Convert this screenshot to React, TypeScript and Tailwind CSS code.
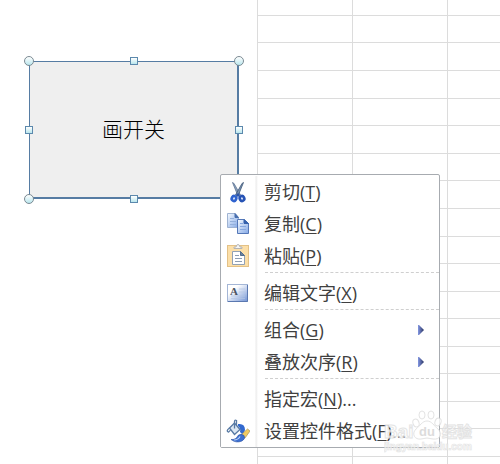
import React from 'react';

interface MenuEntry {
  label: string;
  hotkey: string;
  suffix?: string;
  icon?: React.ReactNode;
  submenu?: boolean;
}

const CutIcon: React.FC = () => (
  <svg viewBox="0 0 24 24" className="w-6 h-6" fill="none">
    <path d="M6.500 2.500 L8 3.500 L14.500 15 L12 16 Z" fill="#8ea2bb" stroke="#5d7494" strokeWidth=".8" />
    <path d="M17.500 2.500 L16 3.500 L9.500 15 L12 16 Z" fill="#7990ae" stroke="#3f5879" strokeWidth=".8" />
    <ellipse cx="8" cy="18.500" rx="2.200" ry="2.500" transform="rotate(28 8 18.500)" fill="#dfe9fa" stroke="#2f63cf" strokeWidth="2.600" />
    <ellipse cx="16" cy="18.500" rx="2.200" ry="2.500" transform="rotate(-28 16 18.500)" fill="#dfe9fa" stroke="#2753b5" strokeWidth="2.600" />
    <path d="M10 15 L12 13 L14 15 L12 17 Z" fill="#2c55a8" />
  </svg>
);

const CopyIcon: React.FC = () => (
  <svg viewBox="0 0 24 24" className="w-6 h-6">
    <defs>
      <linearGradient id="page" x1="0" y1="0" x2="1" y2="1">
        <stop offset="0" stopColor="#f5faff" />
        <stop offset="1" stopColor="#85a9e6" />
      </linearGradient>
    </defs>
    <path d="M1.500 1.500 H9 L12.500 5.500 V15.500 H1.500 Z" fill="url(#page)" stroke="#9fb3d2" />
    <path d="M9 1.500 V5.500 H12.500 Z" fill="#486fae" stroke="#486fae" />
    <path d="M4 6.500 H8 M4 9.500 H10 M4 12.500 H10" stroke="#94b0db" />
    <path d="M11.500 7.500 H18 L22.500 11.500 V21.500 H11.500 Z" fill="url(#page)" stroke="#5578b8" />
    <path d="M18 7.500 V11.500 H22.500 Z" fill="#3461ac" stroke="#3461ac" />
    <path d="M14 11.500 H17 M14 14.500 H20 M14 17.500 H20" stroke="#87a8df" />
  </svg>
);

const PasteIcon: React.FC = () => (
  <svg viewBox="0 0 24 24" className="w-6 h-6">
    <rect x="1.500" y="1.500" width="21" height="21" fill="#fcdfa8" stroke="#e3c187" />
    <path d="M8 3 H10 Q10.500 0.500 12 0.500 T14 3 H16 V4.500 H8 Z" fill="#f5f5f5" stroke="#b3b3b3" />
    <path d="M6.500 7.500 H14.500 L18.500 11.500 V20.500 H6.500 Z" fill="#fff" stroke="#91a1b5" />
    <path d="M14.500 7.500 V11.500 H18.500 Z" fill="#6b829e" stroke="#536d8d" />
    <path d="M9 11.500 H13 M9 14.500 H16 M9 17.500 H16" stroke="#8c9db3" />
  </svg>
);

const TextIcon: React.FC = () => (
  <svg viewBox="0 0 24 24" className="w-6 h-6">
    <defs>
      <linearGradient id="plate" x1="0" y1="0" x2="1" y2="1">
        <stop offset=".3" stopColor="#fff" />
        <stop offset="1" stopColor="#7193d5" />
      </linearGradient>
    </defs>
    <rect x="1.500" y="3.500" width="20" height="17" fill="url(#plate)" stroke="#a4b6d6" />
    <path d="M2 20.500 H21.500 V4" fill="none" stroke="#5a78b0" />
    <path d="M13 8 H19 M13 11 H19 M5 15 H19 M5 17.500 H19" stroke="#b5c5e2" strokeWidth=".7" />
    <text x="4" y="14" fontFamily="Liberation Serif, serif" fontWeight="bold" fontSize="11" fill="#4b5361">A</text>
  </svg>
);

const FormatIcon: React.FC = () => (
  <svg viewBox="0 0 24 24" className="w-6 h-6">
    <path d="M12 5 Q19 4 19 11 L17 16 L14 13 Q15 9 12 7 Z" fill="#3269cf" />
    <path d="M15 16 L21.500 10 L24 12 L19 19 Z" fill="#f0ca62" stroke="#a5925e" strokeWidth=".7" />
    <path d="M5 20.500 Q10 21 12 16.500 Q15 14 18 16.500 Q20 20 16 22 Q10 24.500 5 20.500 Z" fill="#3b6fd2" stroke="#2c52a2" strokeWidth=".6" />
    <path d="M8 21 Q12 21 14 17.500" fill="none" stroke="#bcd2f7" strokeWidth="1.200" />
    <path d="M3.500 9 L8.500 4 L14 10.500 L8.500 15.500 Z" fill="#dbe7f3" stroke="#587aa4" strokeWidth="1.300" />
    <path d="M8.500 9.500 V2.500 Q8.500 0.500 10.500 1.500 V6.500 M3.500 9 Q0.500 11 1.500 12.500 T4.500 11" fill="none" stroke="#587aa4" strokeWidth="1.300" />
  </svg>
);

const groups: MenuEntry[][] = [
  [
    { label: '剪切', hotkey: 'T', icon: <CutIcon /> },
    { label: '复制', hotkey: 'C', icon: <CopyIcon /> },
    { label: '粘贴', hotkey: 'P', icon: <PasteIcon /> }
  ],
  [{ label: '编辑文字', hotkey: 'X', icon: <TextIcon /> }],
  [
    { label: '组合', hotkey: 'G', submenu: true },
    { label: '叠放次序', hotkey: 'R', submenu: true }
  ],
  [
    { label: '指定宏', hotkey: 'N', suffix: '...' },
    { label: '设置控件格式', hotkey: 'F', suffix: '...', icon: <FormatIcon /> }
  ]
];

const MenuItem: React.FC<{ entry: MenuEntry }> = ({ entry }) => (
  <button type="button" role="menuitem" className="flex h-8 w-full items-center text-left">
    <span className="flex w-[34px] shrink-0 justify-center">{entry.icon}</span>
    <span className="flex-1 whitespace-nowrap pl-[9px]">
      {entry.label}(<span className="underline decoration-1 underline-offset-2">{entry.hotkey}</span>){entry.suffix}
    </span>
    {entry.submenu && (
      <svg viewBox="0 0 6 10" className="mr-[15px] h-3 w-1.5">
        <defs>
          <linearGradient id="arrow">
            <stop offset="0" stopColor="#8498e4" />
            <stop offset="1" stopColor="#27315e" />
          </linearGradient>
        </defs>
        <path d="M0 0 H1 L6 5 L1 10 H0 Z" fill="url(#arrow)" />
      </svg>
    )}
  </button>
);

const ContextMenu: React.FC = () => (
  <div
    role="menu"
    className="absolute left-[220px] top-[174px] w-[220px] rounded-xs border border-[#a7abb0] bg-white pt-px text-lg leading-8 text-[#404040]"
  >
    <div className="bg-linear-to-r from-white from-[34px] via-[#ececec] via-[35px] to-white to-[37px]">
      {groups.map((group, i) => (
        <div key={i}>
          {i > 0 && <div className="ml-11 h-[5px] border-t border-dashed border-[#cfcfcf]" />}
          {group.map(entry => (
            <MenuItem key={entry.hotkey} entry={entry} />
          ))}
        </div>
      ))}
    </div>
  </div>
);

// Resize handles: round on the corners, square on the sides
const handles = [
  '-left-[5px] -top-[5px] size-[10px] rounded-full border-[#7b8a93]',
  'left-[101px] -top-1 size-2 border-[#5c89ad]',
  '-right-[5px] -top-[5px] size-[10px] rounded-full border-[#7b8a93]',
  '-left-1 top-[65px] size-2 border-[#5c89ad]',
  '-right-1 top-[65px] size-2 border-[#5c89ad]',
  '-left-[5px] -bottom-[5px] size-[10px] rounded-full border-[#7b8a93]',
  'left-[101px] -bottom-1 size-2 border-[#5c89ad]'
];

const SwitchShape: React.FC = () => (
  <div className="absolute left-[29px] top-[61px] h-[138px] w-[210px]">
    <button
      type="button"
      className="size-full border border-r-2 border-b-2 border-[#567ca3] bg-[#efefef] text-[21px] font-light text-black"
    >
      画开关
    </button>
    {handles.map(handle => (
      <span key={handle} className={`absolute border bg-linear-to-b from-white to-[#b9e6ed] ${handle}`} />
    ))}
  </div>
);

const rowHeights = [
  'h-4', 'h-[27px]', 'h-7', 'h-7', 'h-[27px]', 'h-7', 'h-[27px]', 'h-7', 'h-7',
  'h-[27px]', 'h-7', 'h-[27px]', 'h-7', 'h-[27px]', 'h-7', 'h-[27px]', 'h-7', 'h-7'
];

const Grid: React.FC = () => (
  <table className="ml-[257px] w-[calc(100%-257px)] table-fixed border-separate border-spacing-0">
    <tbody>
      {rowHeights.map((height, i) => (
        <tr key={i} className={height}>
          <td className="w-[95px] border-b border-l border-[#dcdcdc] p-0" />
          <td className="w-[95px] border-b border-l border-[#dcdcdc] p-0" />
          <td className="border-b border-l border-[#dcdcdc] p-0" />
        </tr>
      ))}
    </tbody>
  </table>
);

const Watermark: React.FC = () => (
  <div className="pointer-events-none absolute left-[384px] top-[409px] w-[90px] opacity-80">
    <svg viewBox="0 0 90 44" className="w-full" fill="#fff" stroke="#dedede" strokeWidth="1">
      <ellipse cx="32" cy="14" rx="3" ry="4" transform="rotate(-20 32 14)" />
      <ellipse cx="38" cy="6" rx="3" ry="4" />
      <ellipse cx="47" cy="6" rx="3" ry="4" />
      <ellipse cx="54" cy="13" rx="3" ry="4" transform="rotate(20 54 13)" />
      <path d="M43 12 C38 12 36 17 32 20 C27 25 31 31 37 30 Q43 28 49 30 C56 31 59 25 54 20 C50 17 48 12 43 12 Z" />
      <g fontFamily="Liberation Sans, Noto Sans CJK SC, sans-serif" fontWeight="bold">
        <text x="0" y="29" fontSize="19">Bai</text>
        <text x="35" y="27" fontSize="13" fill="#d4d4d4" stroke="none">du</text>
        <text x="58" y="28" fontSize="15">经验</text>
        <text x="0" y="41" fontSize="10" strokeWidth=".7">jingyan.baidu.com</text>
      </g>
    </svg>
  </div>
);

const App: React.FC = () => {
  return (
    <main className="relative h-screen overflow-hidden bg-white font-['Open_Sans','Noto_Sans_CJK_SC',sans-serif]">
      <Grid />
      <SwitchShape />
      <ContextMenu />
      <Watermark />
    </main>
  );
};

export default App;
